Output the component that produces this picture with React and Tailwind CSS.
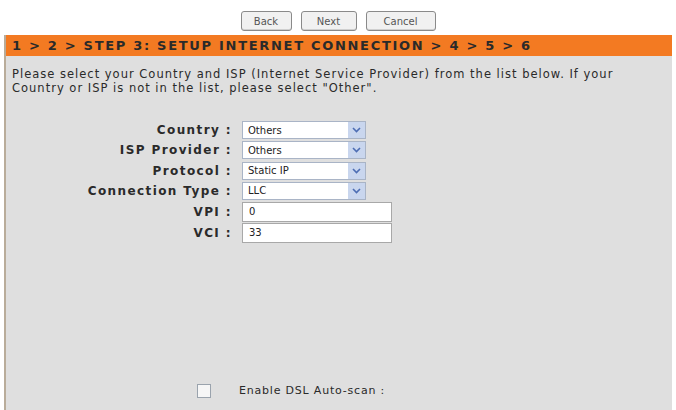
import React from "react";

const selectRows = [
  { label: "Country :", value: "Others" },
  { label: "ISP Provider :", value: "Others" },
  { label: "Protocol :", value: "Static IP" },
  { label: "Connection Type :", value: "LLC" },
];

const inputRows = [
  { label: "VPI :", value: "0" },
  { label: "VCI :", value: "33" },
];

const font = "font-['DejaVu_Sans',Verdana,sans-serif]";

const Chevron = () => (
  <span className="flex h-full w-[17px] items-center justify-center bg-[#c9d6ee]">
    <svg width="9" height="6" viewBox="0 0 9 6">
      <path d="M1 1 L4.5 4.5 L8 1" fill="none" stroke="#4d6db3" strokeWidth="1.6" />
    </svg>
  </span>
);

const SelectBox = ({ value }) => (
  <div className="flex h-[18px] w-[124px] items-center border border-[#a9b4c6] bg-white">
    <span className="flex-1 pl-[5px] text-[10px] text-[#222]">{value}</span>
    <Chevron />
  </div>
);

const TextBox = ({ value }) => (
  <div className="flex h-[20px] w-[150px] items-center border border-[#a8a8a8] bg-white pl-[6px] text-[10px] text-[#222]">
    {value}
  </div>
);

const Button = ({ children, className }) => (
  <button
    className={`h-[20px] rounded-[3px] border border-[#8a8a8a] bg-[#f1f1f1] text-[10px] text-[#555] shadow-[inset_0_-1px_0_#cfcfcf] ${className}`}
  >
    {children}
  </button>
);

const Label = ({ children }) => (
  <span className="w-[236px] pr-[10px] text-right text-[12px] font-bold tracking-[1.4px] text-[#2a2a2a]">
    {children}
  </span>
);

export default function App() {
  return (
    <div className={`h-[410px] w-[676px] overflow-hidden bg-white ${font}`}>
      <div className="flex h-[35px] items-start justify-center gap-[9px] pt-[11px]">
        <Button className="w-[51px]">Back</Button>
        <Button className="w-[56px]">Next</Button>
        <Button className="w-[70px]">Cancel</Button>
      </div>

      <div className="mx-[4px] flex h-[375px] flex-col border-l-[2px] border-[#b9ac9a] bg-[#dfdfdf]">
        <div className="flex h-[21px] items-center bg-[#f37a22] pl-[6px] text-[13px] font-bold tracking-[1.7px] text-[#2a2a2a]">
          1 &gt; 2 &gt; STEP 3: SETUP INTERNET CONNECTION &gt; 4 &gt; 5 &gt; 6
        </div>

        <p className="pl-[6px] pt-[11px] text-[11.5px] leading-[14px] tracking-[1px] text-[#2a2a2a]">
          Please select your Country and ISP (Internet Service Provider) from the list below. If your
          <br />
          Country or ISP is not in the list, please select "Other".
        </p>

        <div className="mt-[26px] flex flex-col gap-[2.3px]">
          {selectRows.map((row) => (
            <div key={row.label} className="flex h-[18px] items-center">
              <Label>{row.label}</Label>
              <SelectBox value={row.value} />
            </div>
          ))}
          {inputRows.map((row) => (
            <div key={row.label} className="flex h-[19px] items-center">
              <Label>{row.label}</Label>
              <TextBox value={row.value} />
            </div>
          ))}
        </div>

        <div className="mt-auto mb-[11px] flex items-center">
          <span className="ml-[191px] h-[14px] w-[14px] border border-[#9aa3ad] bg-[#f6f6f6]" />
          <span className="ml-[28px] text-[11px] tracking-[0.8px] text-[#2a2a2a]">Enable DSL Auto-scan :</span>
        </div>
      </div>
    </div>
  );
}
